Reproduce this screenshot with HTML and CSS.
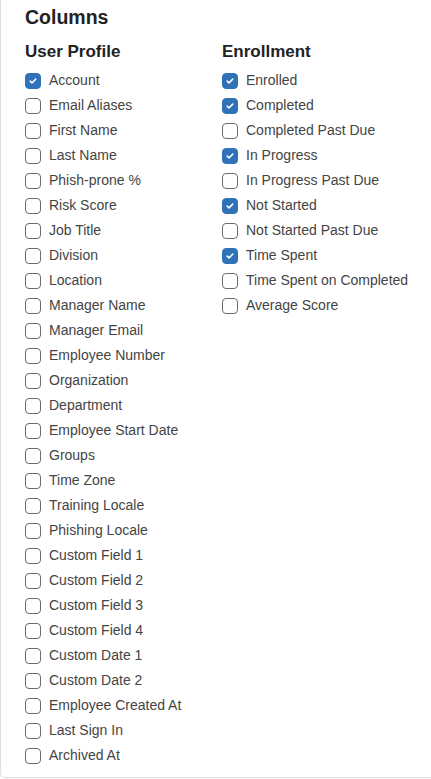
FILE: index.html
```html
<!DOCTYPE html>
<html lang="en">
<head>
    <meta charset="UTF-8">
    <meta name="viewport" content="width=device-width, initial-scale=1.0">
    <title>Columns</title>
    <link rel="stylesheet" href="styles.css">
</head>
<body>
    <div class="columns-panel">
        <h2 class="panel-title">Columns</h2>
        <div class="column-groups">
            <div class="column-group">
                <h3 class="group-title">User Profile</h3>
                <ul class="option-list" id="profile-list"></ul>
            </div>
            <div class="column-group">
                <h3 class="group-title">Enrollment</h3>
                <ul class="option-list" id="enrollment-list"></ul>
            </div>
        </div>
    </div>

    <script>
        // Список колонок: [название, выбрано]
        const profileColumns = [
            ['Account', true],
            ['Email Aliases', false],
            ['First Name', false],
            ['Last Name', false],
            ['Phish-prone %', false],
            ['Risk Score', false],
            ['Job Title', false],
            ['Division', false],
            ['Location', false],
            ['Manager Name', false],
            ['Manager Email', false],
            ['Employee Number', false],
            ['Organization', false],
            ['Department', false],
            ['Employee Start Date', false],
            ['Groups', false],
            ['Time Zone', false],
            ['Training Locale', false],
            ['Phishing Locale', false],
            ['Custom Field 1', false],
            ['Custom Field 2', false],
            ['Custom Field 3', false],
            ['Custom Field 4', false],
            ['Custom Date 1', false],
            ['Custom Date 2', false],
            ['Employee Created At', false],
            ['Last Sign In', false],
            ['Archived At', false]
        ];

        const enrollmentColumns = [
            ['Enrolled', true],
            ['Completed', true],
            ['Completed Past Due', false],
            ['In Progress', true],
            ['In Progress Past Due', false],
            ['Not Started', true],
            ['Not Started Past Due', false],
            ['Time Spent', true],
            ['Time Spent on Completed', false],
            ['Average Score', false]
        ];

        const checkSvg = '<svg viewBox="0 0 16 16" width="10" height="10"><path d="M3.5 8.2l2.9 2.8 6-6" fill="none" stroke="#fff" stroke-width="2.4" stroke-linecap="round" stroke-linejoin="round"/></svg>';

        function renderList(listId, columns) {
            const list = document.getElementById(listId);
            columns.forEach(function (col, i) {
                const id = listId + '-' + i;
                const li = document.createElement('li');
                li.className = 'option';
                li.innerHTML =
                    '<input type="checkbox" id="' + id + '"' + (col[1] ? ' checked' : '') + '>' +
                    '<label for="' + id + '"><span class="box">' + checkSvg + '</span>' + col[0] + '</label>';
                list.appendChild(li);
            });
        }

        renderList('profile-list', profileColumns);
        renderList('enrollment-list', enrollmentColumns);
    </script>
</body>
</html>
```

FILE: styles.css
```css
:root {
    --main-color: #2f72b8;
    --border-color: #dddddd;
    --text-color: #444444;
    --title-color: #222222;
}

* {
    box-sizing: border-box;
    margin: 0;
    padding: 0;
}

body {
    font-family: 'Liberation Sans', Arial, sans-serif;
    background-color: #ffffff;
    color: var(--text-color);
    margin: 0;
}

.columns-panel {
    border: 1px solid var(--border-color);
    border-top: none;
    border-right: none;
    border-radius: 0 0 0 5px;
    padding: 5px 0 9px 24px;
}

.panel-title {
    font-size: 19.5px;
    line-height: 24px;
    font-weight: 700;
    color: var(--title-color);
}

.column-groups {
    display: grid;
    grid-template-columns: 197px 1fr;
    margin-top: 12px;
}

.group-title {
    font-size: 17px;
    line-height: 22px;
    font-weight: 700;
    color: var(--title-color);
    margin-bottom: 5px;
}

.option-list {
    list-style: none;
}

.option {
    height: 25px;
}

.option input {
    display: none;
}

.option label {
    display: flex;
    align-items: center;
    gap: 8px;
    font-size: 14px;
    line-height: 25px;
    color: var(--text-color);
    white-space: nowrap;
    cursor: pointer;
}

.box {
    width: 16px;
    height: 16px;
    flex: none;
    border: 1px solid #6b6b6b;
    border-radius: 4px;
    background-color: #ffffff;
    display: flex;
    align-items: center;
    justify-content: center;
}

.box svg {
    display: none;
}

.option input:checked + label .box {
    background-color: var(--main-color);
    border-color: var(--main-color);
}

.option input:checked + label .box svg {
    display: block;
}
```
